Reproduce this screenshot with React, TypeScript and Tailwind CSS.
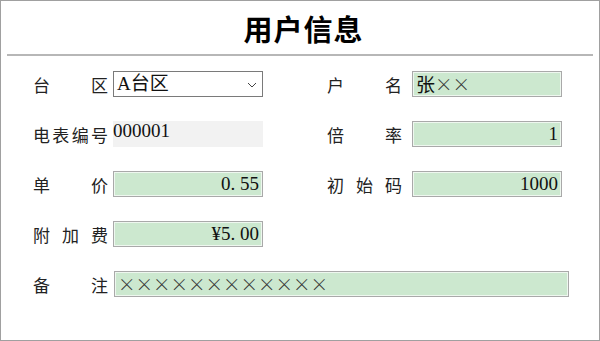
import React from 'react'

const cjk = "font-['Noto_Sans_CJK_SC',sans-serif]"
const val = "font-['Liberation_Serif','Noto_Sans_CJK_SC',serif]"

function Label({ text, w = 'w-[75px]' }: { text: string; w?: string }) {
  return (
    <div className={`${w} flex justify-between text-[17px] text-[#222] ${cjk} leading-none`}>
      {text.split('').map((c, i) => (
        <span key={i}>{c}</span>
      ))}
    </div>
  )
}

function GreenBox({ children, right, w = 'w-[150px]' }: { children: React.ReactNode; right?: boolean; w?: string }) {
  return (
    <div
      className={`${w} h-[26px] border border-[#a9a9a9] bg-[#cce8cf] shadow-[inset_0_0_0_1px_#eef7ef] flex items-center px-[3px] text-[19px] text-[#111] ${val} ${right ? 'justify-end' : ''}`}
    >
      {children}
    </div>
  )
}

export default function App() {
  return (
    <div className="w-[600px] h-[341px] border border-[#a0a0a0] bg-white flex flex-col">
      <div className="h-[53px] flex items-center justify-center pt-[2px] pl-[7px]">
        <h1 className={`text-[29px] font-bold text-black tracking-[1px] ${cjk}`}>用户信息</h1>
      </div>
      <div className="mx-[6px] h-[2px] bg-[#b7b7b7]" />

      <div className="flex flex-col gap-[24px] pt-[15px] pl-[32px]">
        <div className="flex items-center">
          <div className="flex items-center gap-[5px]">
            <Label text="台区" />
            <div className="w-[150px] h-[26px] border border-[#7a7a7a] flex items-center justify-between pl-[3px] pr-[5px] text-[19px] text-[#111]">
              <span className={val}>A台区</span>
              <svg width="10" height="6" viewBox="0 0 10 6" className="mt-[2px]">
                <path d="M1 1 L5 5 L9 1" fill="none" stroke="#444" strokeWidth="1" />
              </svg>
            </div>
          </div>
          <div className="flex items-center gap-[10px] ml-[64px]">
            <Label text="户名" />
            <GreenBox>
              <span className={cjk}>张</span>
              <span className={`${cjk} text-[17.5px] text-[#333] font-light`}>××</span>
            </GreenBox>
          </div>
        </div>

        <div className="flex items-center">
          <div className="flex items-center gap-[5px]">
            <Label text="电表编号" />
            <div className={`w-[150px] h-[26px] bg-[#f2f2f2] flex items-center pb-[5px] text-[19px] text-[#111] ${val}`}>000001</div>
          </div>
          <div className="flex items-center gap-[10px] ml-[64px]">
            <Label text="倍率" />
            <GreenBox right>1</GreenBox>
          </div>
        </div>

        <div className="flex items-center">
          <div className="flex items-center gap-[5px]">
            <Label text="单价" />
            <GreenBox right>0.&nbsp;55</GreenBox>
          </div>
          <div className="flex items-center gap-[10px] ml-[64px]">
            <Label text="初始码" />
            <GreenBox right>1000</GreenBox>
          </div>
        </div>

        <div className="flex items-center gap-[5px]">
          <Label text="附加费" />
          <GreenBox right>¥5.&nbsp;00</GreenBox>
        </div>

        <div className="flex items-center gap-[6px]">
          <Label text="备注" />
          <GreenBox w="w-[455px]">
            <span className={`${cjk} text-[17.5px] text-[#333] font-light`}>××××××××××××</span>
          </GreenBox>
        </div>
      </div>
    </div>
  )
}
